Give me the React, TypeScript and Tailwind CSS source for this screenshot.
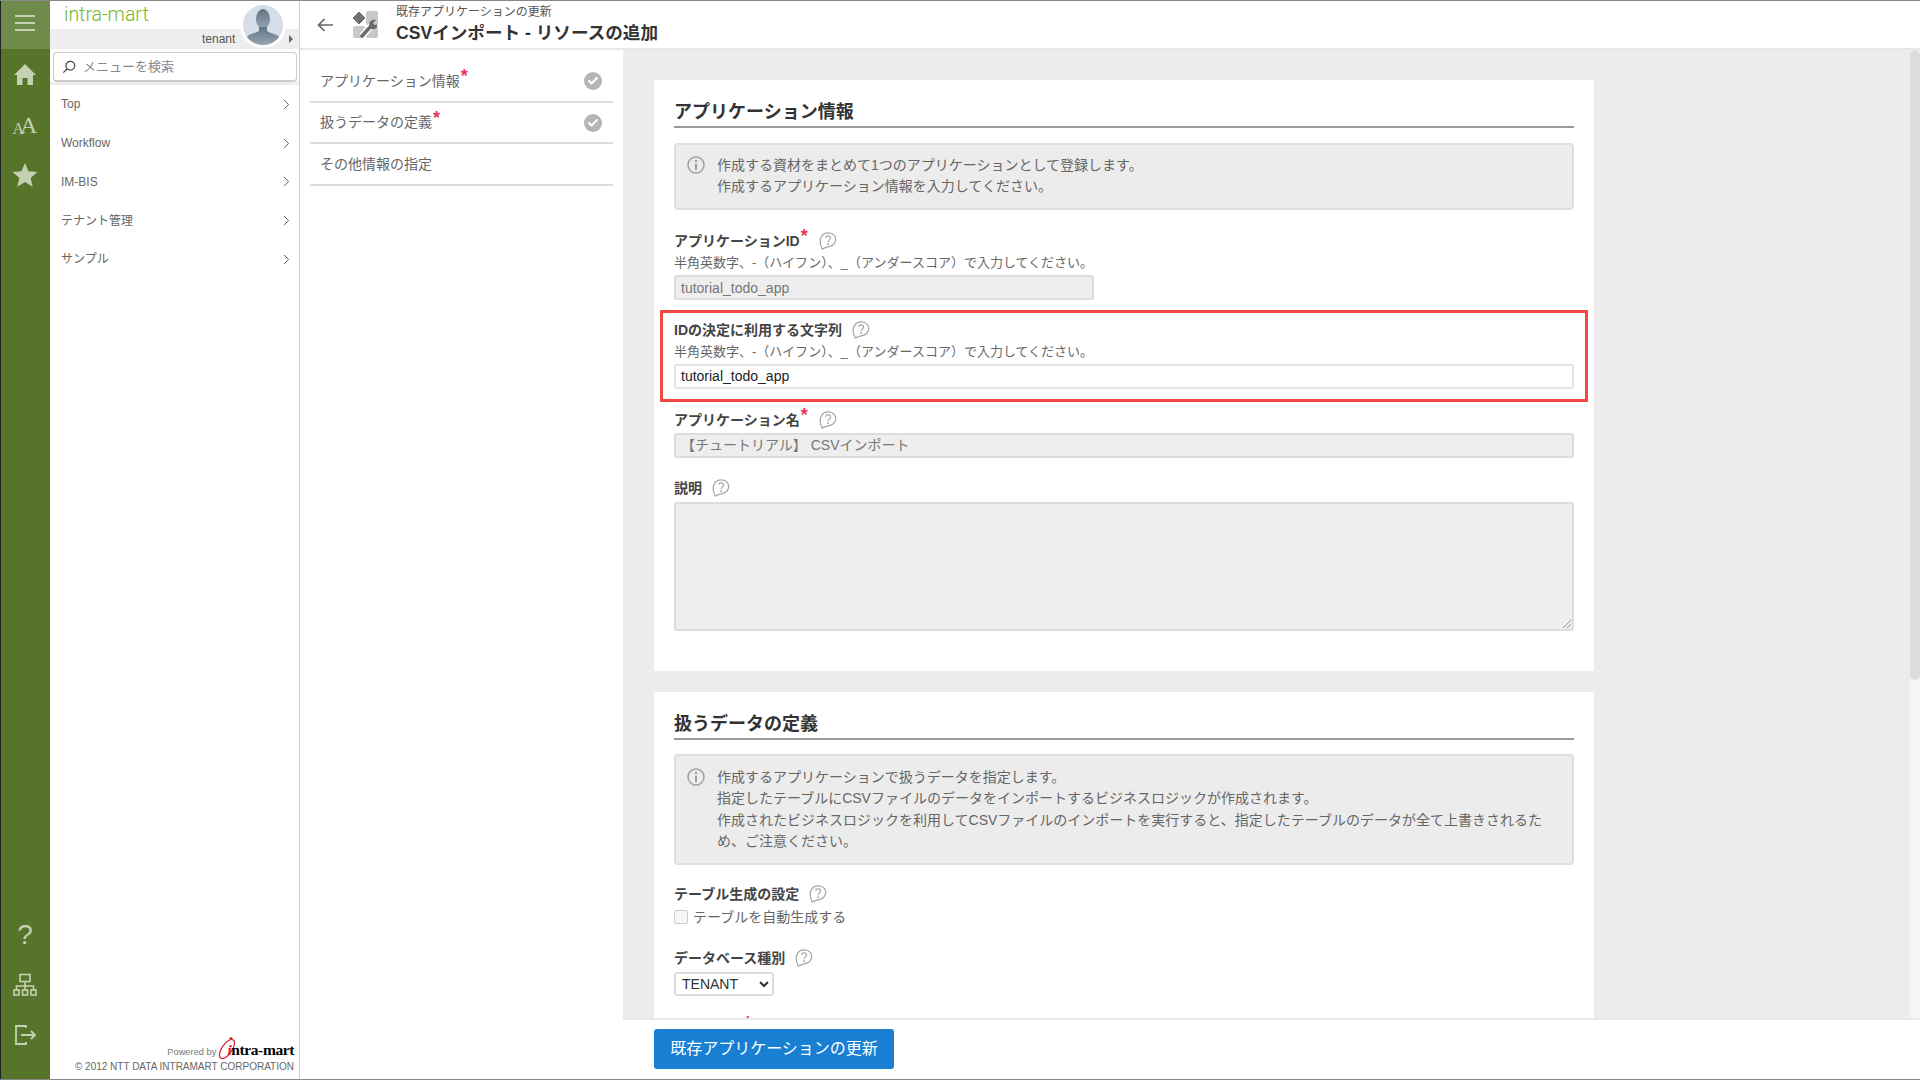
import { ChevronRight, Check } from 'lucide-react';

const menuItems = ['Top', 'Workflow', 'IM-BIS', 'テナント管理', 'サンプル'];

const hint = '半角英数字、-（ハイフン）、_（アンダースコア）で入力してください。';

function HelpIcon({ className = '' }: { className?: string }) {
  return (
    <svg viewBox="0 0 16 16" className={`w-[18px] h-[18px] ${className}`} fill="none" stroke="#a8a8a8" strokeWidth="1.1">
      <path d="M2.8 15.2 C0.8 11 0.6 6.5 2.4 3.6 C4.8 0 11 0 13.6 3 C16 6.2 14.8 11.4 10 12.8 C7.4 13.5 5.4 13.6 2.8 15.2 Z" />
      <path d="M5.9 5.2 C6.2 2.8 10.4 3 10.2 5.5 C10 7.2 8.1 7.3 8.1 9.2" />
      <circle cx="8.1" cy="10.9" r="0.35" />
    </svg>
  );
}

function InfoIcon() {
  return (
    <svg viewBox="0 0 18 18" className="w-[18px] h-[18px] shrink-0" fill="none">
      <circle cx="9" cy="9" r="8" stroke="#a0a0a0" strokeWidth="1.5" />
      <circle cx="9" cy="5" r="1.2" fill="#999" />
      <path d="M9 7.8V14" stroke="#999" strokeWidth="1.9" />
    </svg>
  );
}

function Req() {
  return <span className="text-[#f0325a] text-[18px] leading-none font-bold relative -top-[5px] ml-px mr-px">*</span>;
}

function FieldLabel({ text, required }: { text: string; required?: boolean }) {
  return (
    <div className="flex items-center h-[20px] text-[14px] font-bold text-[#444]">
      <span>{text}</span>
      {required && <Req />}
      <HelpIcon className="ml-[10px]" />
    </div>
  );
}

function InfoBox({ lines, className }: { lines: string[]; className: string }) {
  return (
    <div className={`flex gap-[12px] bg-[#ececec] border-2 border-[#dedede] rounded px-[11px] py-[10px] text-[14px] leading-[21.4px] text-[#666] ${className}`}>
      <div className="pt-[1px]"><InfoIcon /></div>
      <div>
        {lines.map((l) => (
          <p key={l}>{l}</p>
        ))}
      </div>
    </div>
  );
}

function Rail() {
  return (
    <div className="w-[50px] shrink-0 bg-[#56742a] border-l border-[#222] flex flex-col items-center">
      <div className="w-full h-[48px] bg-[#6e8b49] flex flex-col items-center justify-center gap-[5px] pb-[4px] pr-px">
        <span className="w-[20px] h-[2px] bg-[#c5d1b2]" />
        <span className="w-[20px] h-[2px] bg-[#c5d1b2]" />
        <span className="w-[20px] h-[2px] bg-[#c5d1b2]" />
      </div>
      <div className="flex-1 w-full pr-px flex flex-col items-center">
        <svg viewBox="0 0 24 24" className="w-[24px] h-[24px] mt-[13px]" fill="#c5d1b2">
          <path d="M12 2 L23 13 H20 V23 H14.5 V16 H9.5 V23 H4 V13 H1 Z" />
        </svg>
        <div className="mt-[15px] h-[36px] flex items-end font-['Liberation_Serif',serif] text-[#c5d1b2] leading-none">
          <span className="text-[16px] tracking-[-4px]">A</span>
          <span className="text-[24px]">A</span>
        </div>
        <svg viewBox="0 0 24 24" className="w-[26px] h-[26px] mt-[25px]" fill="#c5d1b2">
          <path d="M12 1 L15.2 8.6 L23.5 9.3 L17.2 14.7 L19.1 22.8 L12 18.5 L4.9 22.8 L6.8 14.7 L0.5 9.3 L8.8 8.6 Z" />
        </svg>
        <div className="flex-1" />
        <span className="text-[28px] leading-none font-['Liberation_Sans',sans-serif] text-[#c5d1b2] mb-[24px]">?</span>
        <svg viewBox="0 0 24 24" className="w-[24px] h-[24px] mb-[26px]" fill="none" stroke="#c5d1b2" strokeWidth="1.6">
          <rect x="7" y="1.5" width="10" height="7" />
          <path d="M12 8.5V13 M3.5 17V13H20.5V17 M12 13V17" />
          <rect x="1" y="17" width="5" height="5" />
          <rect x="9.5" y="17" width="5" height="5" />
          <rect x="18" y="17" width="5" height="5" />
        </svg>
        <svg viewBox="0 0 24 24" className="w-[24px] h-[24px] mb-[32px]" fill="none" stroke="#c5d1b2" strokeWidth="1.8">
          <path d="M13 5V3H3V21H13V19" />
          <path d="M8 12H22 M18 8L22 12L18 16" />
        </svg>
      </div>
    </div>
  );
}

function Sidebar() {
  return (
    <div className="w-[250px] shrink-0 bg-white border-r border-[#ccc] flex flex-col">
      <div className="relative h-[48px]">
        <div className="h-[28px] pl-[14px] text-[19.5px] leading-[28px] font-light text-[#78b52f] font-['Roboto',sans-serif]">intra-mart</div>
        <div className="h-[20px] bg-[#eee] flex items-center text-[12px] text-[#555]">
          <span className="ml-[152px]">tenant</span>
          <span className="ml-auto mr-[6px] w-0 h-0 border-y-[4px] border-y-transparent border-l-[4px] border-l-[#666]" />
        </div>
        <div className="absolute left-[190px] top-[1px] w-[46px] h-[46px] rounded-full bg-[#d5dde6] border-[3px] border-white overflow-hidden">
          <svg viewBox="0 0 40 40" className="w-full h-full">
            <defs>
              <linearGradient id="bust" x1="0" y1="0" x2="0" y2="1">
                <stop offset="0" stopColor="#5f7283" />
                <stop offset="1" stopColor="#9aa7b3" />
              </linearGradient>
            </defs>
            <g fill="url(#bust)">
              <ellipse cx="20" cy="14" rx="7" ry="10" />
              <path d="M16 22H24V26C28 29 35 29 37 33V40H3V33C5 29 12 29 16 26Z" />
            </g>
          </svg>
        </div>
      </div>
      <div className="pt-[3px] pl-[3px] pr-[2px] border-b-[3px] border-[#eee]">
        <div className="h-[30px] border border-[#ccc] border-b-2 rounded-sm flex items-center pl-[8px] gap-[7px]">
          <svg viewBox="0 0 16 16" className="w-[14px] h-[14px]" fill="none" stroke="#444" strokeWidth="1.4">
            <circle cx="9.5" cy="6.5" r="5" />
            <path d="M6 10L1.5 14.5" />
          </svg>
          <span className="text-[13px] text-[#888]">メニューを検索</span>
        </div>
      </div>
      <div>
        {menuItems.map((m) => (
          <div key={m} className="h-[38.75px] pl-[11px] pr-[4px] flex items-center justify-between text-[12px] text-[#666]">
            <span>{m}</span>
            <ChevronRight size={17} strokeWidth={1.4} className="text-[#555]" />
          </div>
        ))}
      </div>
      <div className="flex-1" />
      <div className="pr-[5px] pb-[5px] text-right text-[#666]">
        <div className="flex items-end justify-end h-[24px] mb-[1px]">
          <span className="text-[9.3px] mr-[4px] leading-[13px] text-[#777]">Powered by</span>
          <div className="relative flex items-end">
            <svg viewBox="0 0 20 24" className="absolute -left-[3px] -bottom-[1px] w-[20px] h-[24px]" fill="none">
              <ellipse cx="10" cy="13" rx="11" ry="5" stroke="#d8232a" strokeWidth="1.2" transform="rotate(-55 10 13)" />
              <circle cx="14" cy="2.5" r="1.6" fill="#d8232a" />
            </svg>
            <span className="relative pl-[7px] font-['Liberation_Serif',serif] font-bold text-[15.5px] leading-[19px] text-black tracking-[-0.4px]">
              <span className="italic text-[#d8232a]">i</span>ntra-mart
            </span>
          </div>
        </div>
        <div className="text-[10px] leading-[14px] whitespace-nowrap">© 2012 NTT DATA INTRAMART CORPORATION</div>
      </div>
    </div>
  );
}

function SubNav() {
  const items = [
    { text: 'アプリケーション情報', required: true, h: 'h-[42px]', done: true },
    { text: '扱うデータの定義', required: true, h: 'h-[41px]', done: true },
    { text: 'その他情報の指定', required: false, h: 'h-[42px]', done: false },
  ];
  return (
    <div className="w-[323px] shrink-0 bg-white px-[10px] pt-[11px]">
      {items.map((it) => (
        <div key={it.text} className={`${it.h} border-b-2 border-[#ddd] flex items-center pl-[10px] pr-[11px] text-[14px] text-[#666]`}>
          <span>{it.text}</span>
          {it.required && <Req />}
          {it.done && (
            <span className="ml-auto w-[18px] h-[18px] rounded-full bg-[#b5b5b5] flex items-center justify-center">
              <Check size={12} strokeWidth={4} className="text-white" />
            </span>
          )}
        </div>
      ))}
    </div>
  );
}

function Content() {
  return (
    <div className="relative flex-1 bg-[#ececec] overflow-hidden">
      <div className="w-[940px] ml-[31px] pt-[30px]">
        <section className="bg-white h-[591px] px-[20px] pt-[18px]">
          <h2 className="h-[30px] border-b-2 border-[#999] text-[18px] leading-[28px] font-bold text-[#333]">アプリケーション情報</h2>
          <InfoBox
            className="mt-[15px] h-[67px]"
            lines={['作成する資材をまとめて1つのアプリケーションとして登録します。', '作成するアプリケーション情報を入力してください。']}
          />
          <div className="mt-[21px]">
            <FieldLabel text="アプリケーションID" required />
            <p className="text-[13px] leading-[20px] text-[#666] mt-[2px]">{hint}</p>
            <div className="w-[420px] h-[25px] mt-[2px] pt-[1px] bg-[#eee] border-2 border-[#ddd] rounded-[3px] flex items-center px-[5px] text-[14px] text-[#777]">tutorial_todo_app</div>
          </div>
          <div className="-mx-[14px] mt-[10px] h-[92px] border-[3px] border-[#f44845] px-[11px] pt-[7px]">
            <FieldLabel text="IDの決定に利用する文字列" />
            <p className="text-[13px] leading-[20px] text-[#666] mt-[2px]">{hint}</p>
            <div className="h-[25px] mt-[2px] bg-white border-2 border-[#e4e4e4] rounded-[3px] flex items-center px-[5px] text-[14px] text-[#222]">tutorial_todo_app</div>
          </div>
          <div className="mt-[8px]">
            <FieldLabel text="アプリケーション名" required />
            <div className="h-[25px] mt-[3px] bg-[#eee] border-2 border-[#ddd] rounded-[3px] flex items-center px-[5px] text-[14px] text-[#777]">【チュートリアル】 CSVインポート</div>
          </div>
          <div className="mt-[20px]">
            <FieldLabel text="説明" />
            <div className="relative h-[129px] mt-[4px] bg-[#eee] border-2 border-[#ddd] rounded-[3px]">
              <svg viewBox="0 0 10 10" className="absolute right-0 bottom-0 w-[10px] h-[10px]" stroke="#999" strokeWidth="1">
                <path d="M1 9L9 1 M5 9L9 5" />
              </svg>
            </div>
          </div>
        </section>
        <section className="bg-white mt-[21px] px-[20px] pt-[18px] h-[500px]">
          <h2 className="h-[30px] border-b-2 border-[#999] text-[18px] leading-[28px] font-bold text-[#333]">扱うデータの定義</h2>
          <InfoBox
            className="mt-[14px] h-[111px] pt-[11px]"
            lines={[
              '作成するアプリケーションで扱うデータを指定します。',
              '指定したテーブルにCSVファイルのデータをインポートするビジネスロジックが作成されます。',
              '作成されたビジネスロジックを利用してCSVファイルのインポートを実行すると、指定したテーブルのデータが全て上書きされるた',
              'め、ご注意ください。',
            ]}
          />
          <div className="mt-[19px]">
            <FieldLabel text="テーブル生成の設定" />
            <label className="flex items-center h-[20px] mt-[3px] text-[14px] text-[#666]">
              <span className="w-[14px] h-[14px] border border-[#ccc] rounded-[2px] bg-[#f7f7f7] mr-[5px]" />
              テーブルを自動生成する
            </label>
          </div>
          <div className="mt-[21px]">
            <FieldLabel text="データベース種別" />
            <select defaultValue="TENANT" className="block w-[100px] h-[24px] mt-[4px] bg-white border-2 border-[#ddd] rounded-[3px] px-[2px] text-[14px] text-[#333]">
              <option>TENANT</option>
            </select>
          </div>
          <div className="mt-[22px]">
            <FieldLabel text="テーブル名" required />
          </div>
        </section>
      </div>
      <div className="absolute left-0 right-0 bottom-0 h-[61px] bg-white border-t-2 border-[#e8e8e8] pl-[31px] pt-[9px]">
        <button className="w-[240px] h-[40px] bg-[#187fd3] rounded-[3px] text-white text-[16px]">既存アプリケーションの更新</button>
      </div>
      <div className="absolute right-0 top-0 bottom-[61px] w-[10px] bg-[#f5f5f5]">
        <div className="h-[630px] bg-[#dcdcdc] rounded-[5px]" />
      </div>
    </div>
  );
}

export default function App() {
  return (
    <div className="w-[1920px] h-[1080px] overflow-hidden flex flex-col bg-white border-t border-b border-[#888] font-['Liberation_Sans','Noto_Sans_CJK_JP',sans-serif]">
      <div className="flex-1 flex min-h-0">
        <Rail />
        <Sidebar />
        <div className="flex-1 flex flex-col min-w-0">
          <header className="h-[49px] shrink-0 border-b-2 border-[#e8e8e8] flex items-center pl-[17px]">
            <svg viewBox="0 0 16 16" className="w-[16px] h-[16px]" fill="none" stroke="#666" strokeWidth="1.7">
              <path d="M16 8H1.5 M7.5 2L1.5 8L7.5 14" />
            </svg>
            <svg viewBox="0 0 26 27" className="w-[26px] h-[27px] ml-[19px]">
              <rect x="14" y="0" width="12" height="14" rx="2" fill="#c8c8c8" />
              <rect x="1" y="15" width="12" height="12" rx="2" fill="#c8c8c8" />
              <rect x="14" y="15" width="12" height="12" rx="2" fill="#c8c8c8" />
              <path d="M7 1L13 7L7 13L1 7Z" fill="#707070" stroke="#707070" strokeLinejoin="round" />
              <path d="M10 25L20 14" stroke="#fff" strokeWidth="6.5" />
              <path d="M10 25L20 14" stroke="#6a6a6a" strokeWidth="3.5" strokeLinecap="round" />
              <path d="M17.5 14.5C16.5 10.5 20 8 24 9L21 12L22.5 14L25 13.5C26 17 22 19.5 18.5 17.5Z" fill="#6a6a6a" />
            </svg>
            <div className="ml-[18px] -mt-[2px]">
              <div className="text-[12px] leading-[16px] text-[#555]">既存アプリケーションの更新</div>
              <div className="text-[17.6px] leading-[22px] mt-[2px] font-bold text-[#333]">CSVインポート - リソースの追加</div>
            </div>
          </header>
          <div className="flex-1 flex min-h-0">
            <SubNav />
            <Content />
          </div>
        </div>
      </div>
    </div>
  );
}
